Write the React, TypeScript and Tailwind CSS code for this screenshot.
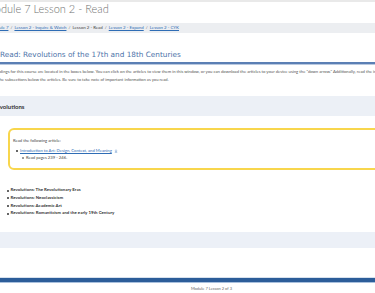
const crumbs = [
  { label: "Module 7", link: true },
  { label: "Lesson 2 - Inquire & Watch", link: true },
  { label: "Lesson 2 - Read", link: false },
  { label: "Lesson 2 - Expand", link: true },
  { label: "Lesson 2 - CYK", link: true },
];

const topics = [
  "Revolutions: The Revolutionary Eras",
  "Revolutions: Neoclassicism",
  "Revolutions: Academic Art",
  "Revolutions: Romanticism and the early 19th Century",
];

function Bullet({ hollow = false }: { hollow?: boolean }) {
  return (
    <span
      className={`inline-block w-[2px] h-[2px] rounded-full shrink-0 ${
        hollow ? "border-[0.5px] border-[#555]" : "bg-[#333]"
      }`}
    />
  );
}

export default function App() {
  return (
    <div className="w-[375px] h-[293px] overflow-hidden bg-white font-['Lato',sans-serif] flex flex-col">
      <div className="h-[2px] bg-[#e9e9e9] shrink-0" />

      <div className="ml-[-15px] h-[13px] leading-[13px] text-[11px] font-light text-[#707070] whitespace-nowrap shrink-0">
        Module 7 Lesson 2 - Read
      </div>

      <div className="mt-[8px] h-[10px] bg-[#eceef1] flex items-center shrink-0">
        <div className="ml-[-10px] flex items-center gap-[2px] text-[4.4px] whitespace-nowrap">
          {crumbs.map((c, i) => (
            <span key={c.label} className="flex items-center gap-[2px]">
              {i > 0 && <span className="text-[#777]">/</span>}
              <span className={c.link ? "text-[#2f6db5] underline" : "text-[#444]"}>{c.label}</span>
            </span>
          ))}
        </div>
      </div>

      <div className="mt-[18px] shrink-0">
        <div className="h-[8px] leading-[8px] text-[7.3px] text-[#4d73a9] font-['DejaVu_Sans',sans-serif] whitespace-nowrap">
          Read: Revolutions of the 17th and 18th Centuries
        </div>
        <div className="mt-[3px] h-[1.5px] bg-[#5b7fb4]" />
        <div className="h-[0.5px] bg-[#b9c9e0]" />
      </div>

      <div className="mt-[4px] ml-[-7px] text-[4.2px] leading-[8px] text-[#555] whitespace-nowrap shrink-0">
        <div>
          Readings for this course are located in the boxes below. You can click on the articles to view them in this window, or you can download the articles to your device using the "down arrow." Additionally, read the information in
        </div>
        <div className="ml-[5px]">
          the subsections below the articles. Be sure to take note of important information as you read.
        </div>
      </div>

      <div className="mt-[12px] h-[20px] bg-[#ecf0f6] flex items-center shrink-0">
        <span className="ml-[-7px] text-[6px] font-bold text-[#333] whitespace-nowrap">Revolutions</span>
      </div>

      <div className="mt-[12px] ml-[8px] w-[420px] h-[42px] border-2 border-[#f8d64c] rounded-[6px] pl-[3px] pt-[8px] text-[4.2px] text-[#444] whitespace-nowrap shrink-0">
        <div className="leading-[6px]">Read the following article:</div>
        <div className="mt-[4px] leading-[6px] flex items-center pl-[3px] gap-[1.5px]">
          <Bullet />
          <span className="text-[#2f6db5] underline ml-[0.5px]">Introduction to Art: Design, Context, and Meaning</span>
          <svg width="4" height="4" viewBox="0 0 8 8" className="ml-[1px]">
            <path d="M4 1v4M2.5 3.5L4 5l1.5-1.5M1.5 6.5h5" stroke="#2f6db5" strokeWidth="0.9" fill="none" />
          </svg>
        </div>
        <div className="mt-[1px] leading-[6px] flex items-center pl-[9px] gap-[2px]">
          <Bullet hollow />
          <span>Read pages 239 - 246.</span>
        </div>
      </div>

      <ul className="mt-[17px] shrink-0">
        {topics.map((t) => (
          <li key={t} className="h-[7.6px] flex items-center pl-[7px] gap-[1.5px] text-[4.4px] font-bold text-[#333] whitespace-nowrap">
            <Bullet />
            <span>{t}</span>
          </li>
        ))}
      </ul>

      <div className="mt-[15px] h-[16px] bg-[#ecf0f7] shrink-0" />

      <div className="mt-[29px] shrink-0">
        <div className="h-[1px] bg-[#d7e1ed]" />
        <div className="h-[4px] bg-[#2c5d99]" />
        <div className="h-[1px] bg-[#a9c0dd]" />
      </div>

      <div className="mt-[3px] h-[5px] leading-[5px] text-[4px] text-[#666] text-center pl-[48px] whitespace-nowrap shrink-0">
        Module 7 Lesson 2 of 3
      </div>
    </div>
  );
}
